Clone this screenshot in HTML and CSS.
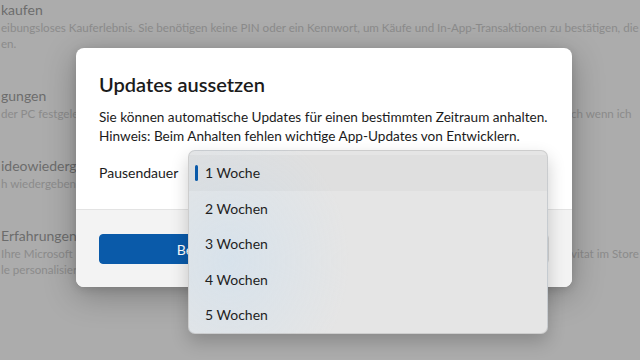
FILE: index.html
```html
<!DOCTYPE html>
<html lang="de">
<head>
    <meta charset="UTF-8">
    <title>Updates aussetzen</title>
    <link rel="stylesheet" href="styles.css">
</head>
<body>
<div class="page">
    <div class="setting">
        <div class="setting-title">kaufen</div>
        <div class="setting-desc">eibungsloses Kauferlebnis. Sie benötigen keine PIN oder ein Kennwort, um Käufe und In-App-Transaktionen zu bestätigen, die</div>
        <div class="setting-desc">en.</div>
    </div>
    <div class="setting">
        <div class="setting-title">gungen</div>
        <div class="setting-desc split"><span>der PC festgelegt</span><span>ch wenn ich</span></div>
    </div>
    <div class="setting">
        <div class="setting-title">ideowiedergabe</div>
        <div class="setting-desc">h wiedergeben</div>
    </div>
    <div class="setting">
        <div class="setting-title">Erfahrungen</div>
        <div class="setting-desc split"><span>Ihre Microsoft</span><span>vitat im Store</span></div>
        <div class="setting-desc">le personalisiert</div>
    </div>
</div>

<div class="dialog">
    <div class="dialog-body">
        <h1>Updates aussetzen</h1>
        <p>Sie können automatische Updates für einen bestimmten Zeitraum anhalten.<br>
            Hinweis: Beim Anhalten fehlen wichtige App-Updates von Entwicklern.</p>
        <div class="field">
            <span class="label">Pausendauer</span>
        </div>
    </div>
    <div class="dialog-footer">
        <button class="btn primary">Bestätigen</button>
        <button class="btn">Abbrechen</button>
    </div>
</div>

<ul class="menu">
    <li class="selected">1 Woche</li>
    <li>2 Wochen</li>
    <li>3 Wochen</li>
    <li>4 Wochen</li>
    <li>5 Wochen</li>
</ul>
</body>
</html>
```

FILE: styles.css
```css
body{margin: 0;padding: 0;
    width: 640px;height: 360px;overflow: hidden;
    background: #acacac;
    font-family: "Segoe UI", Lato, "Noto Sans", sans-serif;
    color: #1b1b1b;
}
.page{padding-left: 1px;white-space: nowrap;overflow: hidden;}
.setting{margin-bottom: 34px;}
.setting-title{font-size: 14px;line-height: 20px;color: #6c6c6c;}
.setting-desc{font-size: 11.6px;line-height: 16px;color: #8b8b8b;}
.split{display: flex;justify-content: space-between;}
.split span:last-child{width: 69px;overflow: hidden;}

.dialog{
    position: absolute;left: 76px;top: 48px;
    width: 496px;height: 239px;
    background: #fff;
    border-radius: 8px;
    box-shadow: 0 8px 32px rgba(0,0,0,0.28), 0 2px 8px rgba(0,0,0,0.12);
    overflow: hidden;
    display: flex;flex-direction: column;
}
.dialog-body{padding: 22px 23px 0;flex: 1;white-space: nowrap;}
.dialog h1{margin: 0 0 10px;font-size: 20px;line-height: 28px;font-weight: 600;}
.dialog p{margin: 0;font-size: 13.6px;line-height: 19px;}
.field{margin-top: 17px;font-size: 14px;line-height: 20px;}
.dialog-footer{
    height: 78px;box-sizing: border-box;
    background: #f3f3f3;border-top: 1px solid #e3e3e3;
    padding: 24px 23px;
    display: flex;gap: 8px;
}
.btn{flex: 1;height: 30px;border-radius: 4px;
    border: 1px solid #d6d6d6;background: #fbfbfb;
    font: inherit;font-size: 14px;color: #1b1b1b;
}
.btn.primary{background: #0a5aa9;border-color: #0a5aa9;color: #fff;}

.menu{
    position: absolute;left: 188px;top: 150px;
    width: 360px;height: 184px;box-sizing: border-box;
    margin: 0;padding: 4px 0 0;list-style: none;
    border-radius: 7px;
    border: 1px solid rgba(0,0,0,0.1);
    background:
        radial-gradient(ellipse 120px 140px at 40px 110px, rgba(214,226,236,0.9), rgba(214,226,236,0)),
        #e5e5e5;
    box-shadow: 0 8px 18px rgba(0,0,0,0.2);
}
.menu li{height: 35.5px;line-height: 35.5px;padding-left: 16px;font-size: 14px;color: #1f1f1f;position: relative;}
.menu li.selected{background: rgba(0,0,0,0.025);}
.menu li.selected::before{
    content: "";position: absolute;left: 6px;top: 10px;
    width: 3px;height: 16px;border-radius: 2px;background: #0a5aa9;
}
```
